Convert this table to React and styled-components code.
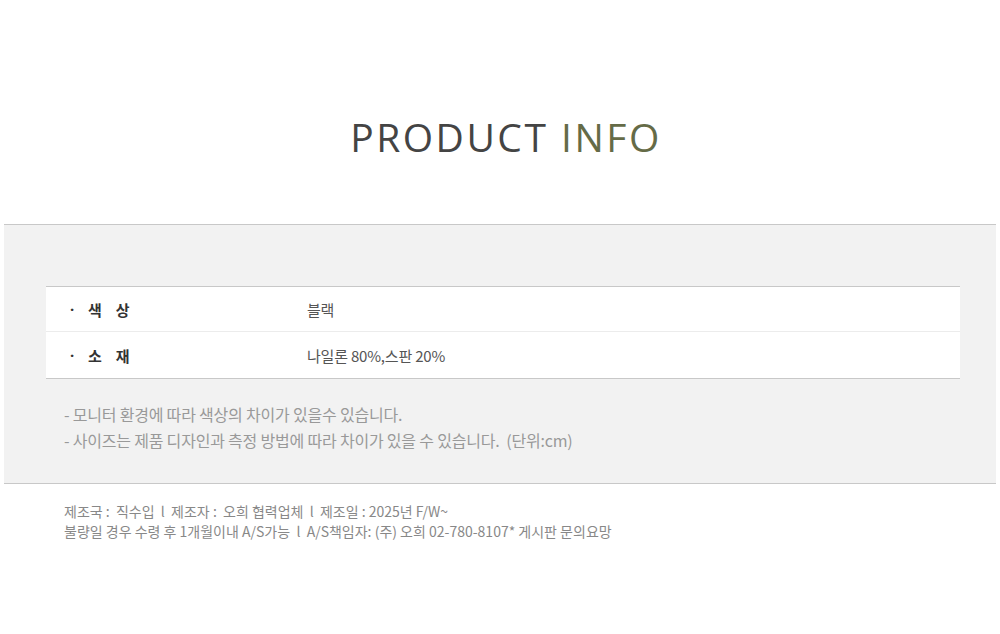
import React from 'react';
import styled, { createGlobalStyle } from 'styled-components';

const GlobalStyle = createGlobalStyle`
  body {
    margin: 0;
    background: #fff;
    font-family: 'Noto Sans CJK KR', 'Noto Sans', sans-serif;
  }
`;

const Page = styled.div`
  width: 1000px;
  padding-bottom: 80px;
`;

const Title = styled.h1`
  margin: 0;
  padding: 112px 0 62px 12px;
  text-align: center;
  font-family: 'Open Sans', 'Noto Sans', sans-serif;
  font-weight: 500;
  font-size: 39px;
  line-height: 50px;
  letter-spacing: 2.5px;
  color: #444;

  & span {
    color: #656b47;
  }
`;

const InfoBox = styled.section`
  margin: 0 4px;
  background: #f2f2f2;
  border-top: 1px solid #c8c8c8;
  border-bottom: 1px solid #c8c8c8;
  padding: 61px 36px 30px 42px;
`;

const Table = styled.div`
  background: #fff;
  border-top: 1px solid #c8c8c8;
  border-bottom: 1px solid #c8c8c8;
`;

const Row = styled.div`
  display: grid;
  grid-template-columns: 261px 1fr;
  align-items: center;
  height: 44px;
  & + & {
    border-top: 1px solid #ececec;
    height: 46px;
  }
`;

const Label = styled.div`
  display: flex;
  align-items: center;
  padding-left: 24px;
  font-size: 15px;
  font-weight: 700;
  color: #333;
`;

const Dot = styled.span`
  width: 18px;
  font-family: 'Noto Sans', sans-serif;
`;

const LabelText = styled.span`
  letter-spacing: 14px;
`;

const Value = styled.div`
  font-size: 15px;
  color: #555;
  letter-spacing: -0.2px;
`;

const Notes = styled.ul`
  list-style: none;
  margin: 22px 0 0;
  padding: 0 0 0 18px;
  font-size: 16px;
  line-height: 26px;
  color: #999;
  letter-spacing: -0.2px;
`;

const Footer = styled.div`
  padding: 17px 0 0 64px;
  font-size: 14px;
  line-height: 20px;
  color: #888;

  & p {
    margin: 0;
  }
`;

const rows = [
  { label: '색상', value: '블랙' },
  { label: '소재', value: '나일론 80%,스판 20%' },
];

export default function App() {
  return (
    <Page>
      <GlobalStyle />
      <Title>
        PRODUCT <span>INFO</span>
      </Title>
      <InfoBox>
        <Table>
          {rows.map(r => (
            <Row key={r.label}>
              <Label>
                <Dot>·</Dot>
                <LabelText>{r.label}</LabelText>
              </Label>
              <Value>{r.value}</Value>
            </Row>
          ))}
        </Table>
        <Notes>
          <li>- 모니터 환경에 따라 색상의 차이가 있을수 있습니다.</li>
          <li>- 사이즈는 제품 디자인과 측정 방법에 따라 차이가 있을 수 있습니다.&nbsp; (단위:cm)</li>
        </Notes>
      </InfoBox>
      <Footer>
        <p>제조국 :&nbsp; 직수입 &nbsp;l&nbsp; 제조자 :&nbsp; 오희 협력업체 &nbsp;l&nbsp; 제조일 : 2025년 F/W~</p>
        <p>불량일 경우 수령 후 1개월이내 A/S가능 &nbsp;l&nbsp; A/S책임자: (주) 오희 02-780-8107* 게시판 문의요망</p>
      </Footer>
    </Page>
  );
}
